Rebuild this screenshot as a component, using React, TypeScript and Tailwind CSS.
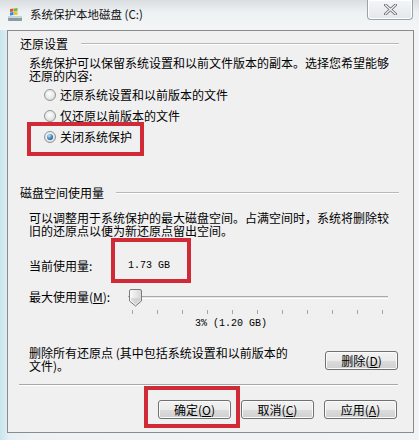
import React from "react";

function WinButton({ label, k, className = "" }: { label: string; k: string; className?: string }) {
  return (
    <div
      className={`w-[73px] h-[19px] rounded-[3px] border border-[#707070] bg-[linear-gradient(#f2f2f2,#ebebeb_50%,#dddddd_50%,#cfcfcf)] shadow-[inset_0_0_0_1px_#fbfbfb] flex items-center justify-center text-[12px] leading-none text-black ${className}`}
    >
      <span>
        {label}(<span className="underline">{k}</span>)
      </span>
    </div>
  );
}

function Radio({ checked, label }: { checked?: boolean; label: string }) {
  return (
    <div className="flex items-center h-[21px] pl-[36px]">
      <span className="w-[12px] h-[12px] rounded-full border border-[#8f9494] bg-[radial-gradient(circle_at_45%_40%,#ffffff,#e4e4e4_60%,#cfcfcf)] flex items-center justify-center">
        {checked && (
          <span className="w-[6px] h-[6px] rounded-full bg-[radial-gradient(circle_at_35%_30%,#b9e6fb,#2b78b6_60%,#0c3f70)]" />
        )}
      </span>
      <span className="ml-[4px] text-[12px] leading-none">{label}</span>
    </div>
  );
}

function GroupHeader({ text, h, gap }: { text: string; h: string; gap: string }) {
  return (
    <div className={`flex items-center pl-[12px] pr-[14px] ${h}`}>
      <span className="text-[12px] leading-none whitespace-nowrap">{text}</span>
      <div className={`flex-1 ${gap} border-t border-[#b8b8b8] border-b border-b-white`} />
    </div>
  );
}

export default function App() {
  const ticks = Array.from({ length: 11 });
  return (
    <div className="relative w-[419px] h-[440px] overflow-hidden bg-[linear-gradient(90deg,#c8e6ee_0px,#e6f0f4_10px,#eef2f5_40px,#f1f4f6_100%)] font-['Noto_Sans_CJK_SC',sans-serif] text-black">
      {/* title bar */}
      <div className="flex h-[30px] bg-[linear-gradient(#d9dde0,#eef1f3_40%,#f3f5f6)]">
        <div className="flex items-center pl-[7px]">
          <svg width="16" height="16" viewBox="0 0 16 16">
            <rect x="1" y="9" width="14" height="5" rx="1" fill="#8a9aa6" />
            <rect x="1" y="9" width="14" height="2" fill="#c9d3da" />
            <rect x="11" y="11.5" width="2" height="1" fill="#5fd35f" />
            <path d="M3 2 L6.5 1.5 L6.5 4.5 L3 5 Z" fill="#e8542a" />
            <path d="M7 1.4 L10.5 1 L10.5 4.2 L7 4.5 Z" fill="#6fbb3b" />
            <path d="M3 5.5 L6.5 5 L6.5 8 L3 8.4 Z" fill="#2e8ed8" />
            <path d="M7 5 L10.5 4.7 L10.5 7.7 L7 8 Z" fill="#f5c02a" />
          </svg>
          <span className="ml-[7px] text-[11.5px] leading-none text-[#111]">系统保护本地磁盘 (C:)</span>
        </div>
        <div className="ml-auto mr-[6px] w-[46px] h-[20px] rounded-b-[4px] border border-t-0 border-[#9aa3aa] bg-[linear-gradient(#f4f6f8,#e3e8ec)] shadow-[inset_0_0_0_1px_#ffffff] flex items-center justify-center">
          <svg width="13" height="11" viewBox="0 0 13 11">
            <path d="M1.5 1 L11.5 10 M11.5 1 L1.5 10" stroke="#6a6f73" strokeWidth="3" strokeLinecap="round" />
            <path d="M1.5 1 L11.5 10 M11.5 1 L1.5 10" stroke="#f4f4f4" strokeWidth="1.2" strokeLinecap="round" />
          </svg>
        </div>
      </div>

      {/* panel */}
      <div className="ml-[7px] w-[407px] h-[403px] border border-[#8b8b8b] bg-[#f0f0f0] flex flex-col text-[12px]">
        <GroupHeader text="还原设置" h="h-[25px]" gap="ml-[13px]" />
        <div className="pl-[21px] leading-[13px] whitespace-nowrap">
          系统保护可以保留系统设置和以前文件版本的副本。选择您希望能够
          <br />
          还原的内容:
        </div>
        <div className="mt-[2px] flex flex-col">
          <Radio label="还原系统设置和以前版本的文件" />
          <Radio label="仅还原以前版本的文件" />
          <Radio label="关闭系统保护" checked />
        </div>

        <div className="mt-[34px]">
          <GroupHeader text="磁盘空间使用量" h="h-[24px]" gap="ml-[12px]" />
        </div>
        <div className="mt-[6px] pl-[21px] leading-[13px] whitespace-nowrap">
          可以调整用于系统保护的最大磁盘空间。占满空间时，系统将删除较
          <br />
          旧的还原点以便为新还原点留出空间。
        </div>

        <div className="mt-[19px] h-[20px] flex items-center pl-[21px]">
          <span className="w-[99px] leading-none">当前使用量:</span>
          <span className="font-['Liberation_Mono',monospace] text-[10px] leading-none">1.73 GB</span>
        </div>

        <div className="mt-[11px] h-[20px] flex items-center pl-[21px]">
          <span className="w-[99px] leading-none whitespace-nowrap">
            最大使用量(<span className="underline">M</span>):
          </span>
          <div className="relative w-[260px] h-[20px]">
            <div className="absolute left-0 right-0 top-[9px] h-[3px] border-t border-[#a9a9a9] border-b border-b-white bg-[#e6e6e6]" />
            <svg className="absolute left-[0px] top-[2px]" width="15" height="18" viewBox="0 0 15 18">
              <defs>
                <linearGradient id="tg" x1="0" y1="0" x2="1" y2="0">
                  <stop offset="0" stopColor="#fbfbfb" />
                  <stop offset="1" stopColor="#d6d6d6" />
                </linearGradient>
              </defs>
              <path d="M1.5 2 Q1.5 0.5 3 0.5 L12 0.5 Q13.5 0.5 13.5 2 L13.5 12 L7.5 17 L1.5 12 Z" fill="url(#tg)" stroke="#7b7b7b" strokeWidth="1" />
              <path d="M3 11 L7.5 15 L12 11 L12 9 L3 9 Z" fill="#c8c8c8" opacity="0.6" />
            </svg>
          </div>
        </div>
        <div className="mt-[3px] h-[4px] pl-[124px]">
          <div className="w-[251px] h-[4px] flex justify-between">
            {ticks.map((_, i) => (
              <span key={i} className="w-[1px] h-[4px] bg-[#a5a5a5]" />
            ))}
          </div>
        </div>
        <div className="mt-[3px] h-[14px] flex items-center pl-[187px] font-['Liberation_Mono',monospace] text-[10px] leading-none whitespace-nowrap">
          3% (1.20 GB)
        </div>

        <div className="mt-[15px] flex items-end pl-[21px] pr-[15px]">
          <div className="leading-[13px] whitespace-nowrap">
            删除所有还原点 (其中包括系统设置和以前版本的
            <br />
            文件)。
          </div>
          <WinButton label="删除" k="D" className="ml-auto mb-[2px] h-[18px]" />
        </div>

        <div className="mt-[12px] mx-[11px] mr-[15px] border-t border-[#a8a8a8] border-b border-b-white" />

        <div className="mt-[14px] flex justify-end gap-[10px] pr-[16px]">
          <WinButton label="确定" k="O" />
          <WinButton label="取消" k="C" />
          <WinButton label="应用" k="A" />
        </div>
      </div>

      {/* annotation boxes */}
      <div className="absolute left-[27px] top-[122px] w-[117px] h-[34px] border-[4px] border-[#d02a36]" />
      <div className="absolute left-[111px] top-[238px] w-[80px] h-[45px] border-[4px] border-[#d02a36]" />
      <div className="absolute left-[144px] top-[386px] w-[96px] h-[42px] border-[4px] border-[#d02a36]" />
    </div>
  );
}
